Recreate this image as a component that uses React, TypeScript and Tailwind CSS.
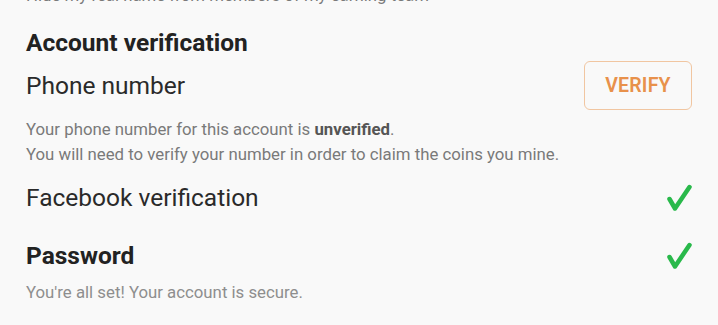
function CheckMark() {
	return (
		<svg width="26" height="28" viewBox="0 0 26 28" className="text-[#29b94b]">
			<path
				d="M3.5 15 L9 24.5 L23.5 3"
				fill="none"
				stroke="currentColor"
				strokeWidth="4.5"
				strokeLinecap="round"
				strokeLinejoin="round"
			/>
		</svg>
	);
}

export default function App() {
	return (
		<div
			className="h-[325px] w-[718px] overflow-hidden bg-[#f9f9f9] pl-[26px] pr-[26px] text-[#2a2a2a]"
			style={{ fontFamily: "Roboto, 'Liberation Sans', sans-serif" }}
		>
			<div className="-mt-[17px] text-[16.8px] leading-[25px] text-[#7a7a7a]">
				Hide my real name from members of my earning team
			</div>

			<h2 className="mt-[20px] text-[24.5px] font-bold leading-[30px] text-[#222]">
				Account verification
			</h2>

			<div className="mt-[3px] flex items-center justify-between">
				<span className="text-[24.5px] leading-[30px]">Phone number</span>
				<button className="h-[49px] w-[108px] rounded-[6px] border border-[#f1c6a1] text-[19.5px] font-semibold tracking-[0.2px] text-[#e8914b]">
					VERIFY
				</button>
			</div>

			<div className="mt-[7px] text-[16.8px] leading-[25px] text-[#7a7a7a]">
				<p>
					Your phone number for this account is{" "}
					<b className="font-bold text-[#555]">unverified</b>.
				</p>
				<p>You will need to verify your number in order to claim the coins you mine.</p>
			</div>

			<div className="mt-[16px] flex items-center justify-between">
				<span className="text-[24.5px] leading-[30px]">Facebook verification</span>
				<CheckMark />
			</div>

			<div className="mt-[28px] flex items-center justify-between">
				<span className="text-[24.5px] font-bold leading-[30px] text-[#222]">Password</span>
				<CheckMark />
			</div>

			<p className="mt-[9px] text-[16.8px] leading-[25px] text-[#8e8e8e]">
				You're all set! Your account is secure.
			</p>
		</div>
	);
}
